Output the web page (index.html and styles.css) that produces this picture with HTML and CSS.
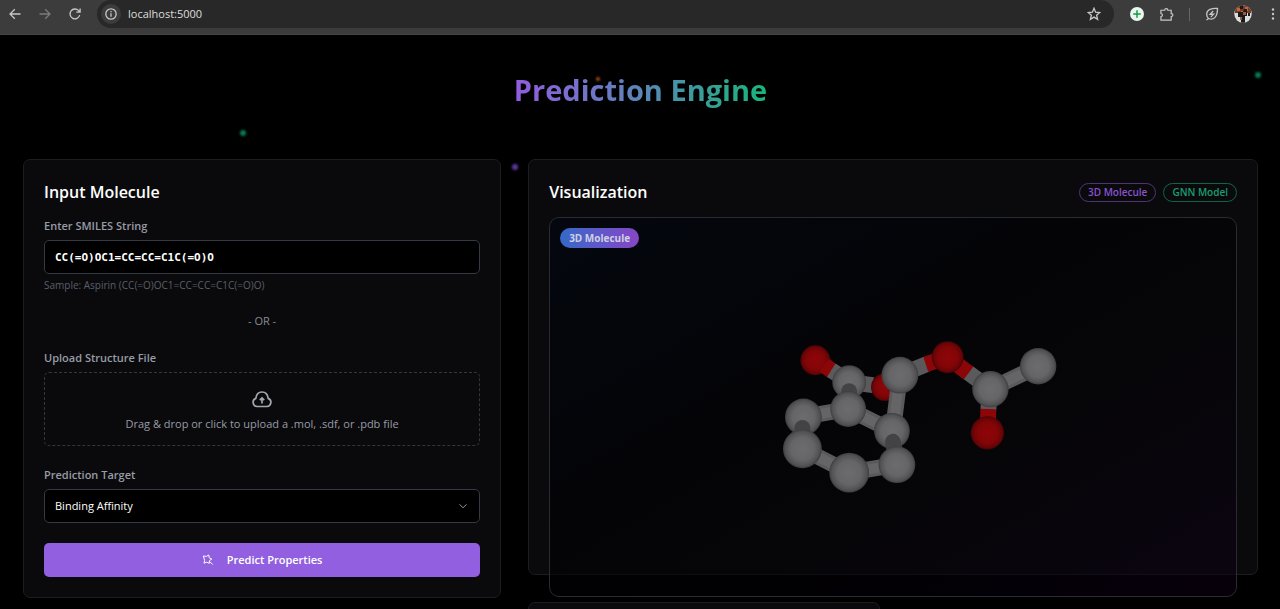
FILE: index.html
```html
<!DOCTYPE html>
<html lang="en">
<head>
<meta charset="utf-8">
<meta name="viewport" content="width=device-width, initial-scale=1">
<title>Prediction Engine</title>
<link rel="stylesheet" href="styles.css">
</head>
<body class="browser">
<header class="toolbar">
  <button class="tool" type="button" aria-label="Back"><svg viewBox="0 0 14 14"><path d="M12.5 7H2M6.8 2.2 2 7l4.8 4.8"/></svg></button>
  <button class="tool tool-dim" type="button" aria-label="Forward"><svg viewBox="0 0 14 14"><path d="M1.5 7H12M7.2 2.2 12 7l-4.8 4.8"/></svg></button>
  <button class="tool" type="button" aria-label="Reload"><svg viewBox="0 0 14 14"><path d="M11.7 8.2A4.9 4.9 0 1 1 10.6 3.6L12 5M12.1 1.4V5.2H8.3"/></svg></button>
  <div class="address">
    <button class="site-info" type="button" aria-label="Site information"><svg viewBox="0 0 14 14"><circle cx="7" cy="7" r="5.2"/><path d="M7 6.3v3.5M7 4v1.2"/></svg></button>
    <input class="url" type="text" aria-label="Address" value="localhost:5000">
    <button class="star" type="button" aria-label="Bookmark"><svg viewBox="0 0 14 14"><path d="m7 1.3 1.6 3.9 4.2.3-3.2 2.7 1 4.1L7 10.1l-3.6 2.2 1-4.1L1.2 5.5l4.2-.3z"/></svg></button>
  </div>
  <button class="tool tool-ext" type="button" aria-label="Extension"><svg viewBox="0 0 14 14"><circle cx="7" cy="7" r="7" fill="#e9f7ec" stroke="none"/><path d="M7 3.2v7.6M3.2 7h7.6" stroke="#169a4c" stroke-width="1.5"/></svg></button>
  <button class="tool" type="button" aria-label="Extensions"><svg viewBox="1 0 15 15"><path d="M2 3.500h4c0-2.400 3.400-2.400 3.400 0h3.600v3.600c2.400 0 2.400 3.200 0 3.200v3.700H2v-3.600c2.200-.2 2.200-3.200 0-3.400z"/></svg></button>
  <span class="divider"></span>
  <button class="tool" type="button" aria-label="Energy saver"><svg viewBox="0 0 14 14"><path d="M12.500 1.500C7 1 1.700 2.500 1.700 7.500c0 2 .8 3.200 2 4 4.500 2 8.800-1 8.800-10zM3.700 11.500 1.500 13"/><path d="M8.200 4 5.200 7.300l3.400-.2-2.800 3"/></svg></button>
  <button class="tool tool-avatar" type="button" aria-label="Profile"><svg viewBox="0 0 18 18"><clipPath id="face"><circle cx="9" cy="9" r="8.700"/></clipPath><g clip-path="url(#face)" stroke="none"><path fill="#d9dde0" d="M0 0h18v18H0z"/><path fill="#7d3b24" d="M1 0h16v8H1z"/><path fill="#b86a48" d="M3 3h3v3H3zM11 2h3v4h-3zM7 6h2v2H7z"/><path fill="#1b1918" d="M6 0h3v4H6zM4 7h5l1-3h3v7h-2v7H7v-6H4zM14 8h2v3h-2z"/><path fill="#9c5a38" d="M9 7h3v3H9zM6 12h2v3H6z"/></g></svg></button>
  <button class="tool tool-menu" type="button" aria-label="Menu"><svg viewBox="0 0 4 14"><g fill="#c7c7c7" stroke="none"><circle cx="2" cy="2.500" r="1.200"/><circle cx="2" cy="7" r="1.200"/><circle cx="2" cy="11.500" r="1.200"/></g></svg></button>
</header>

<main class="page">
  <span class="dot dot-a"></span><span class="dot dot-b"></span><span class="dot dot-c"></span><span class="dot dot-d"></span>
  <h1 class="title">Prediction Engine</h1>
  <div class="columns">
    <form class="card form">
      <h2 class="heading">Input Molecule</h2>
      <label class="label" for="smiles">Enter SMILES String</label>
      <input class="field field-mono" id="smiles" type="text" value="CC(=O)OC1=CC=CC=C1C(=O)O">
      <p class="hint">Sample: Aspirin (CC(=O)OC1=CC=CC=C1C(=O)O)</p>
      <p class="or">- OR -</p>
      <label class="label" for="upload">Upload Structure File</label>
      <button class="dropzone" id="upload" type="button">
        <svg class="cloud" viewBox="0 0 22 22"><path d="M6 18.500a4.200 4.200 0 0 1-1.200-8.100C5.300 6.300 7.800 4 11 4s5.700 2.300 6.200 6.400A4.200 4.200 0 0 1 16 18.500z"/><path d="M11 15.500v-5M8.800 12.200 11 10l2.200 2.200"/></svg>
        <span>Drag &amp; drop or click to upload a .mol, .sdf, or .pdb file</span>
      </button>
      <label class="label" for="target">Prediction Target</label>
      <div class="select-wrap">
        <select class="field" id="target"><option>Binding Affinity</option></select>
        <svg class="chevron" viewBox="0 0 10 10"><path d="m1.500 3.300 3.500 3.500 3.500-3.500"/></svg>
      </div>
      <button class="submit" type="button">
        <svg class="spark" viewBox="0 0 12 12"><path d="m1.300 2 3 .4L6.800 1l.4 2.700 2.600 1.400-2.300 1.500-.2 2.700-2.500-1.100L2 9.200l.6-2.900zM8 7.800l2.800 2.800"/></svg>
        <span>Predict Properties</span>
      </button>
    </form>

    <div class="results">
      <section class="card viewer">
        <div class="viewer-head">
          <h2 class="heading">Visualization</h2>
          <div class="badges"><span class="badge badge-purple">3D Molecule</span><span class="badge badge-green">GNN Model</span></div>
        </div>
        <div class="canvas">
          <span class="tag">3D Molecule</span>
          <svg class="molecule" viewBox="549 217 688 380" role="img" aria-label="Aspirin molecule">
            <defs>
              <radialGradient id="c"><stop offset="0" stop-color="#6c6c6e"/><stop offset=".6" stop-color="#656567"/><stop offset=".88" stop-color="#525254"/><stop offset="1" stop-color="#3d3d3f"/></radialGradient>
              <radialGradient id="o"><stop offset="0" stop-color="#8e0508"/><stop offset=".6" stop-color="#840507"/><stop offset=".88" stop-color="#690406"/><stop offset="1" stop-color="#480305"/></radialGradient>
            </defs>
            <path class="bond-o" d="M873 385 885 388"/>
            <path class="bond-c" d="M849 382 873 385"/>
            <circle cx="885" cy="387" r="14" fill="url(#o)"/>
            <circle cx="815" cy="360" r="15" fill="url(#o)"/>
            <path class="bond-o" d="M824 365 832 371"/>
            <path class="bond-c" d="M831 370 842 377"/>
            <circle cx="849" cy="382" r="17" fill="url(#c)"/>
            <path class="bond-shade" d="M849 391V402"/>
            <g class="bond-c"><path d="M803 417 848 409M848 409 892 431"/></g>
            <g class="bond-core"><path d="M803 417 848 409M848 409 892 431"/></g>
            <circle cx="848" cy="409" r="18" fill="url(#c)"/>
            <path class="bond-c" d="M900 375 893 431"/><path class="bond-core" d="M900 375 893 431"/>
            <circle cx="892" cy="431" r="18" fill="url(#c)"/>
            <path class="bond-c" d="M900 375 927 364"/><path class="bond-o" d="M926 364 948 357"/>
            <circle cx="900" cy="375" r="18.500" fill="url(#c)"/>
            <circle cx="803" cy="417" r="18.500" fill="url(#c)"/>
            <path class="bond-shade" d="M802 428V440"/>
            <path class="bond-shade" d="M893 442 895 452"/>
            <g class="bond-c"><path d="M802 449 849 473 897 465"/></g>
            <g class="bond-core"><path d="M802 449 849 473 897 465"/></g>
            <circle cx="802" cy="449" r="19.500" fill="url(#c)"/>
            <circle cx="897" cy="465" r="18.500" fill="url(#c)"/>
            <circle cx="849" cy="473" r="20" fill="url(#c)"/>
            <path class="bond-c" d="M968 372 991 389 1039 366"/><path class="bond-core" d="M991 389 1039 366"/>
            <path class="bond-o" d="M948 357 969 373"/>
            <path class="bond-c" d="M990 389 989 410"/><path class="bond-o" d="M989 409 988 433"/>
            <circle cx="948" cy="357" r="16" fill="url(#o)"/>
            <circle cx="991" cy="389" r="18.300" fill="url(#c)"/>
            <circle cx="1039" cy="366" r="18.300" fill="url(#c)"/>
            <circle cx="988" cy="433" r="16.700" fill="url(#o)"/>
          </svg>
        </div>
      </section>
      <div class="stats"><section class="card stat"></section></div>
    </div>
  </div>
</main>
</body>
</html>
```
FILE: styles.css
```css
* { box-sizing: border-box; }

body, h1, h2, p { margin: 0; }

button, input, select { font: inherit; color: inherit; }

button { padding: 0; border: 0; background: none; }

.browser {
  display: flex;
  flex-direction: column;
  height: 100vh;
  overflow: hidden;
  background: #000;
  color: #fff;
  font: 11px/16px "Open Sans", "Noto Sans", sans-serif;
}

/* Browser toolbar */
.toolbar {
  display: flex;
  flex: none;
  align-items: center;
  gap: 16px;
  height: 35px;
  padding: 0 5px 6px 8px;
  background: #3c3c3c;
  border-bottom: 1px solid #454545;
}

.tool, .site-info, .star { display: flex; flex: none; }

.toolbar svg {
  width: 14px;
  height: 14px;
  fill: none;
  stroke: #c7c7c7;
  stroke-width: 1.3;
}

.tool-dim svg { stroke: #7b7b7b; }

.address {
  display: flex;
  flex: 1;
  align-items: center;
  gap: 7px;
  height: 28px;
  margin-left: -1px;
  padding: 0 13px 0 4px;
  border-radius: 14px;
  background: #282828;
}

.site-info {
  padding: 3px;
  border-radius: 50%;
  background: #3c3c3c;
}

.url {
  flex: 1;
  min-width: 0;
  padding: 0;
  border: 0;
  outline: 0;
  background: none;
  color: #dedede;
}

.divider {
  width: 1px;
  height: 13px;
  margin: 0 -1px;
  background: #666;
}

.tool-avatar { margin: 0 3px 0 -1px; }

.tool-avatar svg { width: 18px; height: 18px; }

.tool-menu svg { width: 4px; }

/* Page */
.page {
  position: relative;
  flex: 1;
  min-height: 0;
  padding: 37px 22px 0 23px;
  overflow: hidden;
}

.title {
  width: fit-content;
  margin: 0 auto 51px;
  background: linear-gradient(90deg, #925cdf, #5b86b8 50%, #16b67a);
  background-clip: text;
  -webkit-background-clip: text;
  color: transparent;
  font-size: 29px;
  line-height: 36px;
}

.dot {
  position: absolute;
  width: 6px;
  height: 6px;
  border-radius: 50%;
  background: #087a50;
  filter: blur(1px);
}

.dot-a { top: 95px; left: 240px; }
.dot-b { top: 37px; right: 19px; }
.dot-c { top: 129px; left: 512px; background: #5a37a0; }
.dot-d { top: 42px; left: 596px; width: 4px; height: 4px; background: #a04b1c; }

.columns {
  display: grid;
  grid-template-columns: minmax(0, 19fr) minmax(0, 29fr);
  align-items: start;
  gap: 27px;
}

.card {
  padding: 20px;
  border: 1px solid #1d1d20;
  border-radius: 7px;
  background: #0a0a0c;
}

.heading {
  font-size: 16px;
  font-weight: 600;
  line-height: 24px;
}

.form { display: flex; flex-direction: column; }

.form .heading { margin-bottom: 14px; }

.label {
  margin-bottom: 6px;
  color: #979ca6;
  font-weight: 600;
}

.field {
  width: 100%;
  height: 34px;
  padding: 0 10px;
  border: 1px solid #353944;
  border-radius: 5px;
  outline: 0;
  background: #000;
}

.field-mono { font: bold 11px "DejaVu Sans Mono", monospace; }

.hint {
  margin: 3px 0 20px;
  color: #5b5f6a;
  font-size: 10px;
}

.or {
  margin-bottom: 21px;
  color: #878c96;
  text-align: center;
}

.dropzone {
  display: flex;
  flex-direction: column;
  align-items: center;
  gap: 6px;
  margin-bottom: 21px;
  padding: 15px 14px 13px;
  border: 1px dashed #33363e;
  border-radius: 5px;
  color: #979ca6;
}

.cloud {
  width: 22px;
  height: 22px;
  fill: none;
  stroke: #a3a7b1;
  stroke-width: 1.7;
}

.select-wrap { position: relative; margin-bottom: 20px; }

.select-wrap .field { display: block; appearance: none; }

.chevron {
  position: absolute;
  top: 12px;
  right: 12px;
  width: 10px;
  height: 10px;
  fill: none;
  stroke: #9b9b9f;
  pointer-events: none;
}

.submit {
  display: flex;
  align-items: center;
  justify-content: center;
  gap: 13px;
  height: 34px;
  border-radius: 5px;
  background: #915fdf;
  font-weight: 600;
}

.spark {
  width: 12px;
  height: 12px;
  fill: none;
  stroke: #fff;
}

.results { display: grid; gap: 27px; }

.viewer { height: 416px; }

.viewer-head {
  display: flex;
  align-items: center;
  justify-content: space-between;
  margin-bottom: 13px;
}

.badges { display: flex; gap: 7px; }

.badge {
  padding: 0 8px;
  border: 1px solid;
  border-radius: 10px;
  font-size: 10px;
  font-weight: 600;
  line-height: 17px;
}

.badge-purple { border-color: #4d3575; color: #8654cc; }
.badge-green { border-color: #0c6547; color: #199e70; }

/* The canvas is taller than its card and shows past the card's lower edge. */
.canvas {
  position: relative;
  height: 380px;
  border: 1px solid #292b32;
  border-radius: 10px;
  background: linear-gradient(150deg, rgb(2 6 16 / 75%), rgb(1 1 4 / 65%) 40%, rgb(2 0 5 / 50%) 65%, rgb(13 0 21 / 55%));
}

.molecule { display: block; width: 100%; height: 100%; }

.tag {
  position: absolute;
  top: 10px;
  left: 10px;
  padding: 0 9px;
  border-radius: 10px;
  background: linear-gradient(90deg, #3569c9, #8846c6);
  color: #cfd0e4;
  font-size: 10px;
  font-weight: 700;
  line-height: 20px;
}

.bond-c, .bond-o, .bond-core, .bond-shade { fill: none; stroke-width: 16; }
.bond-c { stroke: #5a5a5c; }
.bond-o { stroke: #8c0608; }
.bond-core { stroke: #656567; stroke-width: 10; }
.bond-shade { stroke: #434345; stroke-linecap: round; }

.stats {
  display: grid;
  grid-template-columns: repeat(2, minmax(0, 1fr));
  gap: 27px;
}

.stat { min-height: 100px; }
```
